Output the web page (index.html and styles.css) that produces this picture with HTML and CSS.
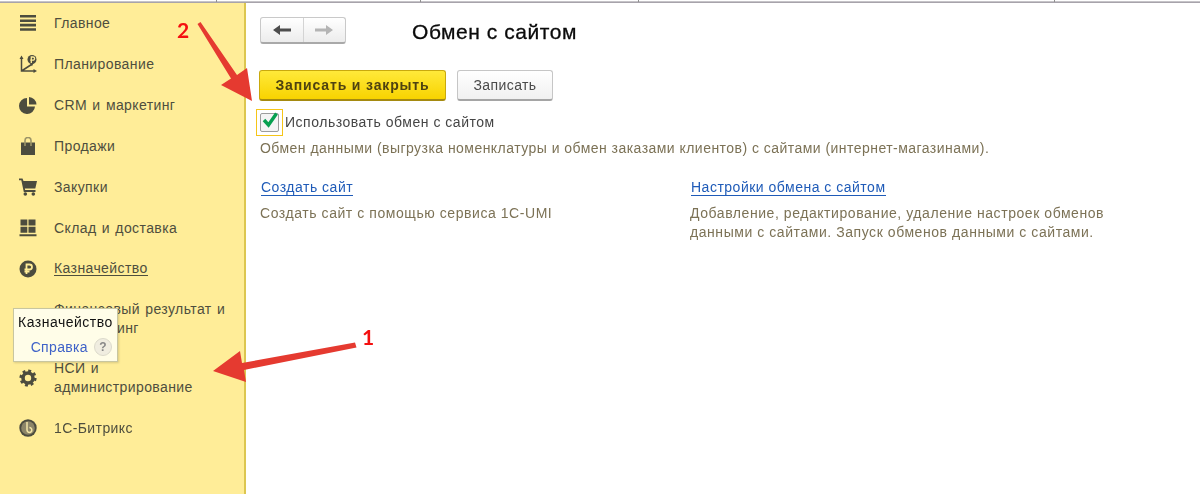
FILE: index.html
```html
<!DOCTYPE html>
<html lang="ru">
<head>
<meta charset="utf-8">
<title>Обмен с сайтом</title>
<link rel="stylesheet" href="styles.css">
</head>
<body>
<div class="topline"></div>
<div class="app">
  <nav class="side">
    <a class="item"><svg class="ico" viewBox="0 0 18 18"><path d="M1 1h16v2.600H1zM1 5.400h16v2.600H1zM1 9.800h16v2.600H1zM1 14.200h16v2.600H1z"/></svg><span>Главное</span></a>
    <a class="item"><svg class="ico" viewBox="0 0 18 18"><path class="ln" d="M2.500 3v13h13M2.500 16l10-6.500"/><path d="M.5 4l2-3.500 2 3.500zM14.500 14l3.500 2-3.500 2zM11 8.500l3.500-.5-1.500 3.200z"/><circle cx="13" cy="4.500" r="4.500"/><path class="wl thin" d="M12.300 8V2h1.700a1.500 1.500 0 0 1 0 3.200h-2.800"/></svg><span>Планирование</span></a>
    <a class="item"><svg class="ico" viewBox="0 0 18 18"><path d="M8 2a8 8 0 1 0 8 8.500H8zM10 1v7.500h7.500A8 8 0 0 0 10 1z"/></svg><span>CRM и маркетинг</span></a>
    <a class="item"><svg class="ico" viewBox="0 0 18 18"><path d="M2 5.500h14V18H2z"/><path class="lt" d="M6 9V3.500a3 3 0 0 1 6 0V9"/></svg><span>Продажи</span></a>
    <a class="item"><svg class="ico" viewBox="0 0 18 18"><path d="M0 .5h3.500l1 2.500H18l-1.700 7.500H5.800l.4 1.500h10.300V14H4.800L2.300 2.200H0z"/><circle cx="6.300" cy="16" r="1.800"/><circle cx="14.300" cy="16" r="1.800"/></svg><span>Закупки</span></a>
    <a class="item"><svg class="ico" viewBox="0 0 18 18"><path d="M1.500 .5h6.800v6H1.500zM9.500 .5h7v6h-7zM1.500 7.800h6.800v6H1.500zM9.500 7.800h7v6h-7zM.5 15.200h17v2H.5z"/></svg><span>Склад и доставка</span></a>
    <a class="item"><svg class="ico" viewBox="0 0 18 18"><circle cx="9" cy="9" r="8.500"/><path class="wl" d="M7.500 14V4.500h3a2.300 2.300 0 0 1 0 5h-5M5.500 11.700h5"/></svg><span class="active">Казначейство</span></a>
    <a class="item two"><span class="ico-gap"></span><span>Финансовый результат и контроллинг</span></a>
    <a class="item two"><svg class="ico" viewBox="0 0 18 18"><circle class="gear-core" cx="9" cy="9" r="5"/><circle class="gear-teeth" cx="9" cy="9" r="7.300"/></svg><span>НСИ и<br>администрирование</span></a>
    <a class="item"><svg class="ico" viewBox="0 0 18 18"><circle cx="9" cy="9" r="8.700"/><circle class="bx-in" cx="9" cy="9" r="6.800"/><path class="bx-b" d="M8 3v8a2.400 2.400 0 1 0 2.400-2.400"/></svg><span>1С-Битрикс</span></a>
  </nav>
  <main class="main">
    <div class="head">
      <div class="nav-btns">
        <span class="nav-btn"><svg viewBox="0 0 18 12" width="18" height="12"><path fill="#4d4d4d" d="M0 6l7-5v3.500h11v3H7V11z"/></svg></span>
        <span class="nav-btn"><svg viewBox="0 0 18 12" width="18" height="12"><path fill="#b4b4b4" d="M18 6l-7-5v3.500H0v3h11V11z"/></svg></span>
      </div>
      <h1 class="title">Обмен с сайтом</h1>
    </div>
    <div class="actions">
      <button class="btn primary">Записать и закрыть</button>
      <button class="btn">Записать</button>
    </div>
    <div class="check-row">
      <span class="focus"><span class="box"><svg class="mark" viewBox="0 0 16 16" width="16" height="16"><path d="M2 8l4.500 5L14.500 1.500" fill="none" stroke="#07a050" stroke-width="3.400"/></svg></span></span>
      <span class="check-label">Использовать обмен с сайтом</span>
    </div>
    <p class="note desc">Обмен данными (выгрузка номенклатуры и обмен заказами клиентов) с сайтами (интернет-магазинами).</p>
    <div class="cols">
      <section class="col">
        <a class="link">Создать сайт</a>
        <p class="note">Создать сайт с помощью сервиса 1С-UMI</p>
      </section>
      <section class="col">
        <a class="link">Настройки обмена с сайтом</a>
        <p class="note">Добавление, редактирование, удаление настроек обменов<br>данными с сайтами. Запуск обменов данными с сайтами.</p>
      </section>
    </div>
  </main>
</div>
<div class="tip">
  <div class="tip-title">Казначейство</div>
  <div class="tip-help"><span class="tip-link">Справка</span><span class="q">?</span></div>
</div>
<svg class="arrows" viewBox="0 0 1200 494" width="1200" height="494">
  <path fill="#e53a30" d="M197.500 24L200.500 22L237 75L247 68L252 101L221 85L231 78.500Z"/>
  <path fill="#e53a30" d="M355 342.500L356.500 347.500L244 370L246 382L213 371L240 351L242 363Z"/>
  <text class="num" x="177" y="38">2</text>
  <text class="num" x="362" y="345">1</text>
</svg>
</body>
</html>
```
FILE: styles.css
```css
* { box-sizing: border-box; }
html, body { margin: 0; padding: 0; }
body {
  width: 1200px;
  height: 494px;
  overflow: hidden;
  background: #fff;
  font-family: "Liberation Sans", Arial, sans-serif;
  font-size: 14px;
  color: #4a4a3a;
  position: relative;
}
.topline {
  height: 3px;
  background:
    linear-gradient(#8f8f8f, #8f8f8f) 216px 0 / 1px 2px no-repeat,
    linear-gradient(#8f8f8f, #8f8f8f) 420px 0 / 1px 2px no-repeat,
    linear-gradient(#8f8f8f, #8f8f8f) 638px 0 / 1px 2px no-repeat,
    linear-gradient(#8f8f8f, #8f8f8f) 1054px 0 / 1px 2px no-repeat,
    linear-gradient(#fff 1px, #e4e4e4 1px, #a7a3ab 2px);
}
.app { display: flex; height: 491px; filter: blur(.3px); }
.side {
  width: 246px;
  flex: none;
  background: #ffed98;
  border-right: 2px solid #dcc650;
}
.side .item:first-child { margin-top: -1px; }
.item {
  display: flex;
  align-items: center;
  height: 41px;
  padding-left: 19px;
  color: #4e4e3e;
  letter-spacing: 0.4px;
  word-spacing: 1px;
}
.item.two { height: 59px; line-height: 19px; }
.ico { width: 18px; height: 18px; flex: none; margin-right: 17px; fill: #4c4c3e; }
.ico-gap { width: 18px; flex: none; margin-right: 17px; }
.ln { fill: none; stroke: #4c4c3e; stroke-width: 1.500; }
.lt { fill: none; stroke: #9c9468; stroke-width: 1.600; }
.wl { fill: none; stroke: #ffed98; stroke-width: 1.800; }
.wl.thin { stroke-width: 1.300; }
.gear-core { fill: none; stroke: #4c4c3e; stroke-width: 3.600; }
.gear-teeth { fill: none; stroke: #4c4c3e; stroke-width: 2.600; stroke-dasharray: 2.900 2.830; }
.bx-in { fill: #8d8668; }
.bx-b { fill: none; stroke: #f3e6a8; stroke-width: 1.500; }
.active { border-bottom: 1px solid #4e4e3e; line-height: 14px; }
.main { flex: 1; padding: 14px 0 0 14px; }
.head { display: flex; align-items: flex-start; height: 33px; }
.nav-btns {
  display: flex;
  width: 86px;
  height: 27px;
  border: 1px solid #c9c9c9;
  border-bottom: 2px solid #a9a9a9;
  border-radius: 3px;
  background: linear-gradient(#fff, #ececec);
}
.nav-btn { flex: 1; display: flex; align-items: center; justify-content: center; }
.nav-btn + .nav-btn { border-left: 1px solid #d4d4d4; }
.title {
  margin: 2px 0 0 66px;
  font-size: 21px;
  line-height: 26px;
  letter-spacing: 0.55px;
  font-weight: 400;
  color: #0a0a0a;
  -webkit-text-stroke: 0.3px #0a0a0a;
}
.actions { display: flex; gap: 11px; margin-top: 20px; margin-left: -1px; }
.btn {
  font: inherit;
  height: 31px;
  padding: 0;
  width: 96px;
  letter-spacing: 0.4px;
  color: #4a4a4a;
  background: linear-gradient(#fff, #f1f1f1);
  border: 1px solid #c6c6c6;
  border-bottom: 2px solid #a5a5a5;
  border-radius: 3px;
}
.primary {
  width: 187px;
  font-weight: 700;
  letter-spacing: 0.85px;
  color: #4f4310;
  background: linear-gradient(#ffe93a, #f8d300);
  border-color: #c9a90d;
  border-bottom-color: #a58a10;
}
.check-row { display: flex; align-items: center; margin-top: 7px; margin-left: -4px; height: 28px; }
.focus {
  width: 27px; height: 27px;
  border: 1px solid #f5c518;
  display: flex; align-items: center; justify-content: center;
}
.box {
  width: 19px; height: 19px;
  border: 1px solid #9c9c9c;
  border-radius: 2px;
  background: #f4f4f4;
  position: relative;
}
.mark { position: absolute; left: 1px; top: -2px; }
.check-label { margin-left: 2px; letter-spacing: 0.52px; color: #454545; }
.note { margin: 0; color: #7c7256; letter-spacing: 0.46px; line-height: 19px; }
.desc { margin-top: 3px; }
.cols { display: flex; margin-top: 21px; }
.col { width: 430px; padding-left: 1px; }
.col .note { margin: 8px 0 0 -1px; letter-spacing: 0.56px; }
.link { color: #1f5bb8; border-bottom: 1px solid #1f5bb8; letter-spacing: 0.5px; display: inline-block; line-height: 15px; }
.tip {
  position: absolute;
  left: 13px; top: 308px;
  width: 105px; height: 54px;
  background: #fffde8;
  border: 1px solid #c8c6a0;
  box-shadow: 1px 1px 2px rgba(0,0,0,.15);
  padding: 5px 4px;
  color: #111;
  filter: blur(.3px);
}
.tip-title { line-height: 16px; letter-spacing: 0.5px; }
.tip-help { display: flex; align-items: center; justify-content: flex-end; gap: 6px; margin-top: 8px; color: #3f62c8; letter-spacing: 0.35px; padding-right: 1px; }
.q {
  width: 18px; height: 18px; border-radius: 50%;
  background: #f0ede0; border: 1px solid #dcdacb;
  color: #888; font-weight: 700; font-size: 12px;
  display: flex; align-items: center; justify-content: center;
}
.arrows { position: absolute; left: 0; top: 0; pointer-events: none; }
.num { font: 700 21px Lato, sans-serif; fill: #f41010; }
```
